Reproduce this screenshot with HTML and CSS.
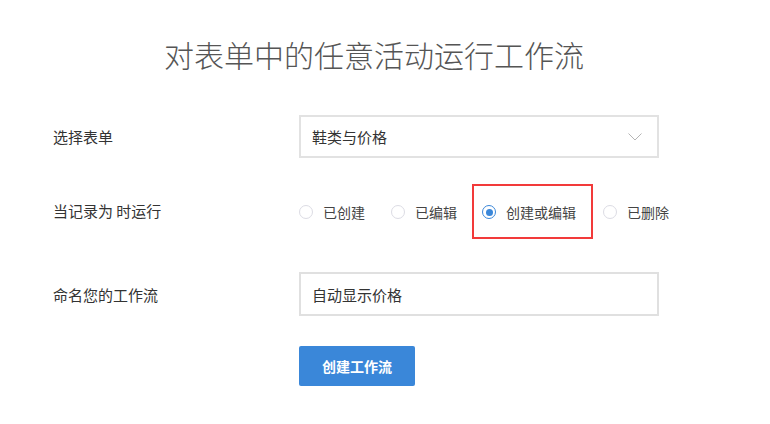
FILE: index.html
```html
<!DOCTYPE html>
<html lang="zh-CN">
<head>
<meta charset="utf-8">
<title>工作流</title>
<link rel="stylesheet" href="styles.css">
</head>
<body>
<div class="page">
  <h1 class="title">对表单中的任意活动运行工作流</h1>
  <div class="form">
    <div class="row row-select">
      <div class="label">选择表单</div>
      <div class="control select">
        <span class="value">鞋类与价格</span>
        <svg class="chevron" width="14" height="8" viewBox="0 0 14 8"><path d="M0.5 0.5 L7 7 L13.5 0.5" fill="none" stroke="#b5b5b5" stroke-width="1"/></svg>
      </div>
    </div>
    <div class="row row-radio">
      <div class="label">当记录为 时运行</div>
      <div class="radios">
        <label class="radio"><span class="dot"></span><span class="rtext">已创建</span></label>
        <label class="radio"><span class="dot"></span><span class="rtext">已编辑</span></label>
        <label class="radio checked highlight"><span class="dot"></span><span class="rtext">创建或编辑</span></label>
        <label class="radio"><span class="dot"></span><span class="rtext">已删除</span></label>
      </div>
    </div>
    <div class="row row-input">
      <div class="label">命名您的工作流</div>
      <div class="control input"><span class="value">自动显示价格</span></div>
    </div>
    <div class="row row-button">
      <div class="label"></div>
      <button class="btn">创建工作流</button>
    </div>
  </div>
</div>
</body>
</html>
```

FILE: styles.css
```css
html, body {
  margin: 0;
  padding: 0;
  background: #ffffff;
}
body {
  font-family: "Noto Sans CJK SC", "Noto Sans", sans-serif;
  color: #333333;
}
.page {
  width: 770px;
  height: 424px;
  overflow: hidden;
}
.title {
  margin: 0;
  padding-top: 34px;
  padding-right: 22px;
  height: 40px;
  line-height: 40px;
  font-size: 30px;
  font-weight: 300;
  color: #555555;
  text-align: center;
}
.form {
  margin-top: 41px;
  padding-left: 53px;
}
.row {
  display: flex;
  align-items: center;
}
.label {
  width: 246px;
  flex: none;
  font-size: 15px;
  color: #333333;
}
.row-select { height: 43px; }
.row-radio { height: 44px; margin-top: 32px; }
.row-input { height: 44px; margin-top: 38px; }
.row-button { height: 40px; margin-top: 30px; }
.row-radio .label { margin-top: -3px; }

.control {
  box-sizing: border-box;
  width: 360px;
  height: 100%;
  border: 2px solid #e0e0e0;
  display: flex;
  align-items: center;
  padding: 0 14px 0 11px;
  font-size: 15px;
  color: #333333;
  background: #fff;
}
.select {
  justify-content: space-between;
  border-color: #e2e2e2;
}
.chevron {
  margin-right: 1px;
  margin-top: 1px;
}
.radios {
  display: flex;
  align-items: center;
  height: 100%;
}
.radio {
  position: relative;
  display: flex;
  align-items: center;
  font-size: 14px;
  color: #444444;
  height: 100%;
}
.radio:nth-child(1) { margin-right: 26px; }
.radio:nth-child(2) { margin-right: 25px; }
.radio:nth-child(3) { margin-right: 27px; }
.dot {
  box-sizing: border-box;
  width: 14px;
  height: 14px;
  border-radius: 50%;
  border: 1px solid #dcdce4;
  margin-right: 10px;
  position: relative;
  flex: none;
}
.radio.checked .dot {
  border: 1.5px solid #3a87d9;
}
.radio.checked .dot::after {
  content: "";
  position: absolute;
  left: 50%;
  top: 50%;
  width: 7px;
  height: 7px;
  margin: -3.5px 0 0 -3.5px;
  border-radius: 50%;
  background: #3a87d9;
}
.radio.highlight::before {
  content: "";
  position: absolute;
  left: -10px;
  right: -17px;
  top: -6px;
  bottom: -5px;
  border: 2.5px solid #f23a3a;
}
.btn {
  box-sizing: border-box;
  width: 116px;
  height: 40px;
  border: none;
  border-radius: 2px;
  background: #3a87d9;
  color: #ffffff;
  font-family: "Noto Sans CJK SC", "Noto Sans", sans-serif;
  font-size: 14px;
  font-weight: 700;
  padding: 0;
}
```
